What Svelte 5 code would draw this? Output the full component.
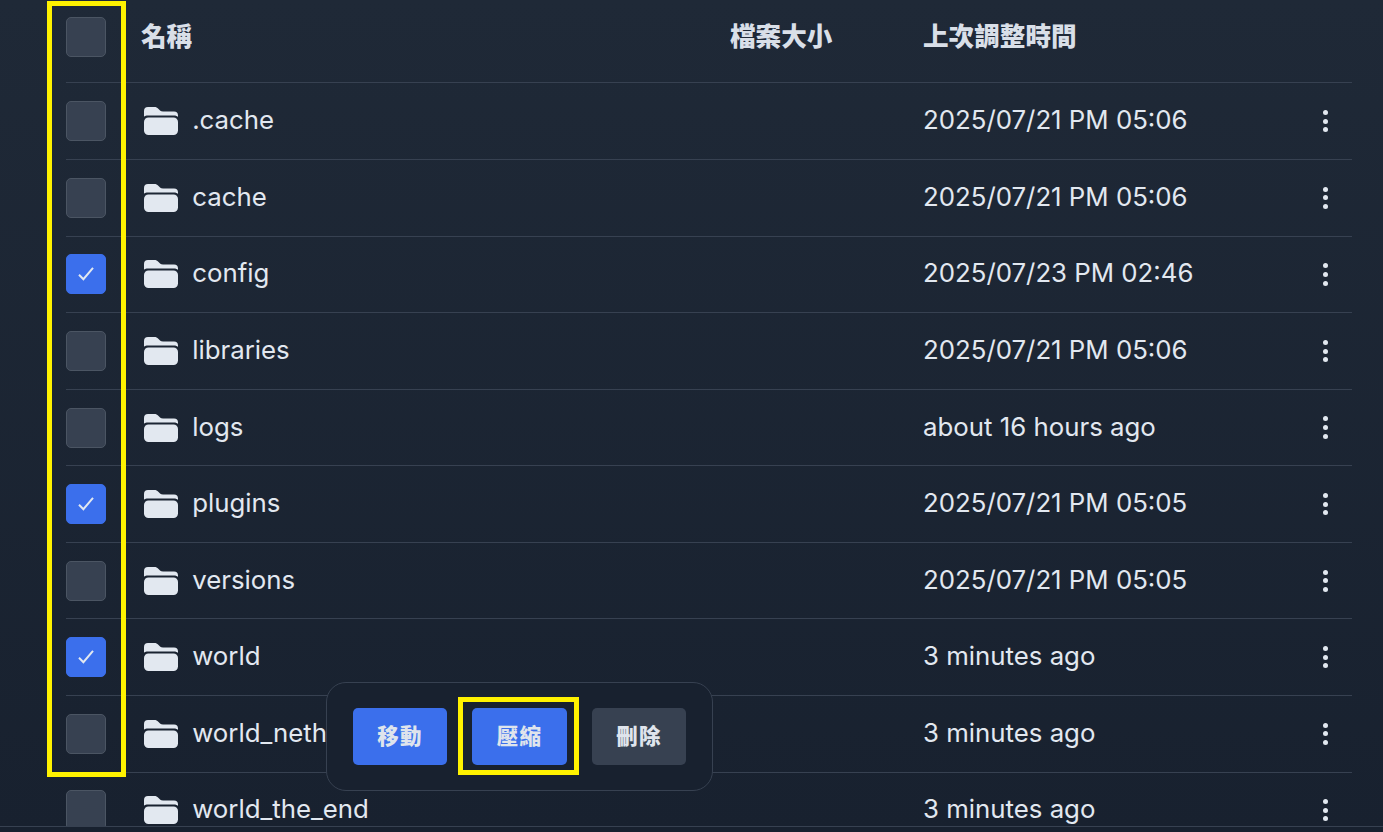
<script lang="ts">
  interface Row {
    name: string;
    time: string;
    checked?: boolean;
  }

  const rows: Row[] = [
    { name: ".cache", time: "2025/07/21 PM 05:06" },
    { name: "cache", time: "2025/07/21 PM 05:06" },
    { name: "config", time: "2025/07/23 PM 02:46", checked: true },
    { name: "libraries", time: "2025/07/21 PM 05:06" },
    { name: "logs", time: "about 16 hours ago" },
    { name: "plugins", time: "2025/07/21 PM 05:05", checked: true },
    { name: "versions", time: "2025/07/21 PM 05:05" },
    { name: "world", time: "3 minutes ago", checked: true },
    { name: "world_nether", time: "3 minutes ago" },
    { name: "world_the_end", time: "3 minutes ago" },
  ];
</script>

<div class="page">
  <div class="table">
    <div class="row head">
      <span class="box"></span>
      <span class="col-name">名稱</span>
      <span>檔案大小</span>
      <span>上次調整時間</span>
      <span></span>
    </div>
    {#each rows as row}
      <div class="row">
        <span class="box" class:checked={row.checked}>
          {#if row.checked}
            <svg viewBox="0 0 16 16" width="16" height="16" fill="none" stroke="currentColor" stroke-width="2">
              <path d="M1 8.800 5.400 13.200 15 1.800" />
            </svg>
          {/if}
        </span>
        <span class="col-name name">
          <svg class="folder" viewBox="0 0 34 28" width="34" height="28" fill="currentColor">
            <path d="M0 9.500V4A4 4 0 0 1 4 0H10.500C12 0 13.200 .6 14.300 1.700L15.800 3.200C16.600 4 17.500 4.400 18.800 4.400H30A4 4 0 0 1 34 8.400V10C33 9 31.800 8.500 30 8.500H4C2.200 8.500 1 9 0 9.500Z" />
            <rect x="0" y="10.500" width="34" height="17.500" rx="4.500" />
          </svg>
          <span class="label">{row.name}</span>
        </span>
        <span></span>
        <span class="label">{row.time}</span>
        <span class="menu"><i></i><i></i><i></i></span>
      </div>
    {/each}
  </div>

  <div class="actions">
    <button class="btn primary">移動</button>
    <button class="btn primary wide">壓縮</button>
    <button class="btn muted">刪除</button>
  </div>

  <div class="mark mark-col"></div>
  <div class="mark mark-btn"></div>
</div>

<style>
  :global(body) {
    margin: 0;
    background: #18212f;
  }

  .page {
    position: relative;
    height: 832px;
    overflow: hidden;
    background: linear-gradient(180deg, #1f2937 0%, #18212f 100%);
    color: #e2e8f0;
    font-family: Inter, "Noto Sans CJK TC", sans-serif;
    font-size: 25.8px;
  }

  .table {
    height: 826px;
    overflow: hidden;
    padding: 0 31px 0 66px;
    border-bottom: 1px solid #374151;
    box-sizing: content-box;
  }

  .row {
    display: grid;
    grid-template-columns: 75px 589px 193px 1fr 55px;
    align-items: center;
    height: 76.55px;
    box-sizing: border-box;
    border-bottom: 1px solid #374151;
  }

  .head {
    height: 83px;
    margin-bottom: 0.6px;
    padding-bottom: 14px;
    font-size: 25.6px;
    font-weight: 800;
    color: #d9dfe8;
  }

  .head .box {
    margin-top: 6px;
  }

  .box {
    display: flex;
    align-items: center;
    justify-content: center;
    width: 40px;
    height: 40px;
    box-sizing: border-box;
    background: #374151;
    border: 1px solid #4b5563;
    border-radius: 5px;
  }

  .box.checked {
    background: #3b6fec;
    border-color: #3b6fec;
  }

  .name {
    display: flex;
    align-items: center;
    gap: 14.2px;
  }

  .label {
    margin-bottom: 3px;
  }

  .folder {
    margin-left: 3px;
    flex: none;
  }

  .menu {
    display: flex;
    flex-direction: column;
    align-items: center;
    gap: 3.6px;
    width: 5px;
    justify-self: center;
    margin-left: 2px;
  }

  .menu i {
    width: 5px;
    height: 5px;
    border-radius: 50%;
    background: #e2e8f0;
  }

  .actions {
    position: absolute;
    left: 326px;
    top: 682px;
    display: flex;
    gap: 25px;
    box-sizing: border-box;
    height: 109px;
    padding: 25px 26px;
    background: #18212f;
    border: 1px solid #374151;
    border-radius: 20px;
  }

  .btn {
    width: 94px;
    height: 57px;
    padding: 0 0 5px;
    border: none;
    border-radius: 5px;
    color: #dfe4ec;
    font-family: inherit;
    font-size: 21.5px;
    font-weight: 900;
    letter-spacing: 1.2px;
  }

  .wide {
    width: 95px;
  }

  .primary {
    background: #3b6fec;
  }

  .muted {
    background: #374151;
  }

  .mark {
    position: absolute;
    box-sizing: border-box;
    border: 5px solid #fff200;
  }

  .mark-col {
    left: 47px;
    top: 1px;
    width: 79px;
    height: 776px;
  }

  .mark-btn {
    left: 458px;
    top: 697px;
    width: 121px;
    height: 78px;
  }
</style>
